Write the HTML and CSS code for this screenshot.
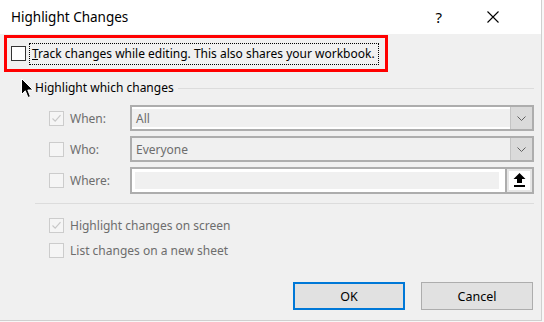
FILE: index.html
```html
<!DOCTYPE html>
<html lang="en">
<head>
  <meta charset="UTF-8" />
  <title>Highlight Changes</title>
  <link rel="stylesheet" href="styles.css">
</head>
<body>

  <div class="dialog">

    <!-- Title bar -->
    <div class="titlebar">
      <span class="title">Highlight Changes</span>
      <span class="help">?</span>
      <svg class="close" width="12" height="12" viewBox="0 0 12 12">
        <path d="M0.5 0.5 L11.5 11.5 M11.5 0.5 L0.5 11.5" stroke="#000" stroke-width="1.1" fill="none"/>
      </svg>
    </div>

    <!-- Track changes (highlighted in red) -->
    <div class="track">
      <span class="box box-dark"></span>
      <span class="track-label"><u>T</u>rack changes while editing. This also shares your workbook.</span>
    </div>

    <!-- Highlight which changes group -->
    <div class="group">
      <div class="group-head">
        <span class="group-title">Highlight which changes</span>
        <span class="group-line"></span>
      </div>

      <div class="row">
        <span class="box box-checked">
          <svg width="13" height="13" viewBox="0 0 13 13"><path d="M2.5 6.5 L5.2 9.2 L10.5 3.2" stroke="#c8c8c8" stroke-width="1.2" fill="none"/></svg>
        </span>
        <span class="row-label">When:</span>
        <div class="combo combo-lit">
          <span class="combo-text">All</span>
          <span class="drop">
            <svg width="9" height="5" viewBox="0 0 9 5"><path d="M0.5 0.5 L4.5 4.5 L8.5 0.5" stroke="#606060" stroke-width="1" fill="none"/></svg>
          </span>
        </div>
      </div>

      <div class="row">
        <span class="box"></span>
        <span class="row-label">Who:</span>
        <div class="combo">
          <span class="combo-text">Everyone</span>
          <span class="drop">
            <svg width="9" height="5" viewBox="0 0 9 5"><path d="M0.5 0.5 L4.5 4.5 L8.5 0.5" stroke="#606060" stroke-width="1" fill="none"/></svg>
          </span>
        </div>
      </div>

      <div class="row">
        <span class="box"></span>
        <span class="row-label">Where:</span>
        <div class="combo combo-input">
          <span class="input-field"></span>
          <span class="pick">
            <svg width="13" height="15" viewBox="0 0 13 15"><path d="M6.5 0 L12.5 6 L9 6 L9 10 L4 10 L4 6 L0.5 6 Z" fill="#000"/><rect x="1" y="12" width="11" height="2" fill="#000"/></svg>
          </span>
        </div>
      </div>

      <div class="separator"></div>

      <div class="check-row">
        <span class="box box-checked">
          <svg width="13" height="13" viewBox="0 0 13 13"><path d="M2.5 6.5 L5.2 9.2 L10.5 3.2" stroke="#c8c8c8" stroke-width="1.2" fill="none"/></svg>
        </span>
        <span class="row-label">Highlight changes on screen</span>
      </div>
      <div class="check-row">
        <span class="box"></span>
        <span class="row-label">List changes on a new sheet</span>
      </div>
    </div>

    <!-- Buttons -->
    <div class="buttons">
      <button class="btn btn-default">OK</button>
      <button class="btn">Cancel</button>
    </div>

    <!-- mouse pointer in the screenshot -->
    <svg class="cursor" width="13" height="21" viewBox="0 0 13 21">
      <path d="M0.5 0.5 L0.5 16.5 L4.3 12.8 L7 19.5 L9.4 18.5 L6.8 12 L12 12 Z" fill="#000" stroke="#fff" stroke-width="1"/>
    </svg>
  </div>

</body>
</html>
```

FILE: styles.css
```css
/* Basic page styling */
* {
  box-sizing: border-box;
  margin: 0;
  padding: 0;
}
body {
  background: #f7f7f7;
  font-family: "Noto Sans", "Open Sans", sans-serif;
  font-size: 12px;
  color: #000;
}

.dialog {
  position: relative;
  width: 542px;
  height: 321px;
  background: #f0f0f0;
  border-right: 1px solid #cfcfcf;
  border-bottom: 1px solid #cfcfcf;
}

/* Title bar */
.titlebar {
  height: 34px;
  background: #fff;
  display: flex;
  align-items: center;
  padding-left: 11px;
}
.title {
  font-size: 13.5px;
  flex: 1;
}
.help {
  font-size: 15px;
  margin-right: 45px;
}
.close {
  margin-right: 42px;
}

/* Track changes row with red outline */
.track {
  margin: 1px 0 0 4px;
  width: 384px;
  height: 37px;
  border: 3px solid #ff0000;
  display: flex;
  align-items: center;
  padding-left: 4px;
}
.track-label {
  margin-left: 4px;
  padding: 1px 3px 2px 2px;
  outline: 1px dotted #000;
  outline-offset: 0;
  white-space: nowrap;
  color: #000;
}

/* Checkboxes */
.box {
  width: 15px;
  height: 15px;
  border: 1px solid #cccccc;
  background: #f5f5f5;
  display: flex;
  align-items: center;
  justify-content: center;
  flex-shrink: 0;
}
.box-dark {
  border-color: #333;
  background: #fff;
}

/* Group */
.group {
  padding-left: 35px;
  padding-right: 7px;
}
.group-head {
  display: flex;
  align-items: center;
  height: 20px;
  margin-top: 6px;
}
.group-title {
  margin-top: -2px;
}
.group-line {
  flex: 1;
  height: 1px;
  background: #dcdcdc;
  margin-left: 4px;
}
.row {
  display: flex;
  align-items: center;
  height: 26px;
  margin-top: 5px;
  padding-left: 14px;
}
.group-head + .row {
  margin-top: 7px;
}
.row-label {
  color: #6d6d6d;
  margin-left: 6px;
  width: 60px;
  white-space: nowrap;
}
.check-row .row-label {
  width: auto;
}

/* Combo boxes */
.combo {
  flex: 1;
  height: 26px;
  border: 2px solid #adadad;
  display: flex;
  align-items: stretch;
}
.combo-lit {
  box-shadow: inset 0 2px #fff, inset 0 -2px #fff;
}
.combo-text {
  flex: 1;
  color: #6d6d6d;
  padding-left: 4px;
  display: flex;
  align-items: center;
}
.drop {
  width: 22px;
  background: #dadada;
  border-left: 1px solid #c4c4c4;
  display: flex;
  align-items: center;
  justify-content: center;
}
.combo-input {
  height: 27px;
  background: #fff;
  padding: 3px 6px 3px 3px;
}
.input-field {
  flex: 1;
  background: #f0f0f0;
}
.pick {
  width: 27px;
  margin: -3px -6px -3px 6px;
  border-left: 2px solid #adadad;
  background: #fff;
  box-shadow: inset 0 0 0 2px #e6e6e6;
  display: flex;
  align-items: center;
  justify-content: center;
}

.separator {
  height: 1px;
  background: #dcdcdc;
  margin-top: 10px;
}
.check-row {
  display: flex;
  align-items: center;
  height: 15px;
  padding-left: 14px;
  margin-top: 10px;
}
.separator + .check-row {
  margin-top: 14px;
}

/* Buttons */
.buttons {
  display: flex;
  justify-content: flex-end;
  gap: 16px;
  padding-right: 8px;
  margin-top: 24px;
}
.btn {
  width: 112px;
  height: 28px;
  background: #e1e1e1;
  border: 1px solid #adadad;
  font-family: inherit;
  font-size: 12.5px;
  color: #000;
}
.btn-default {
  border: 2px solid #0078d7;
}

/* Mouse pointer overlay */
.cursor {
  position: absolute;
  left: 21px;
  top: 78px;
}
```
